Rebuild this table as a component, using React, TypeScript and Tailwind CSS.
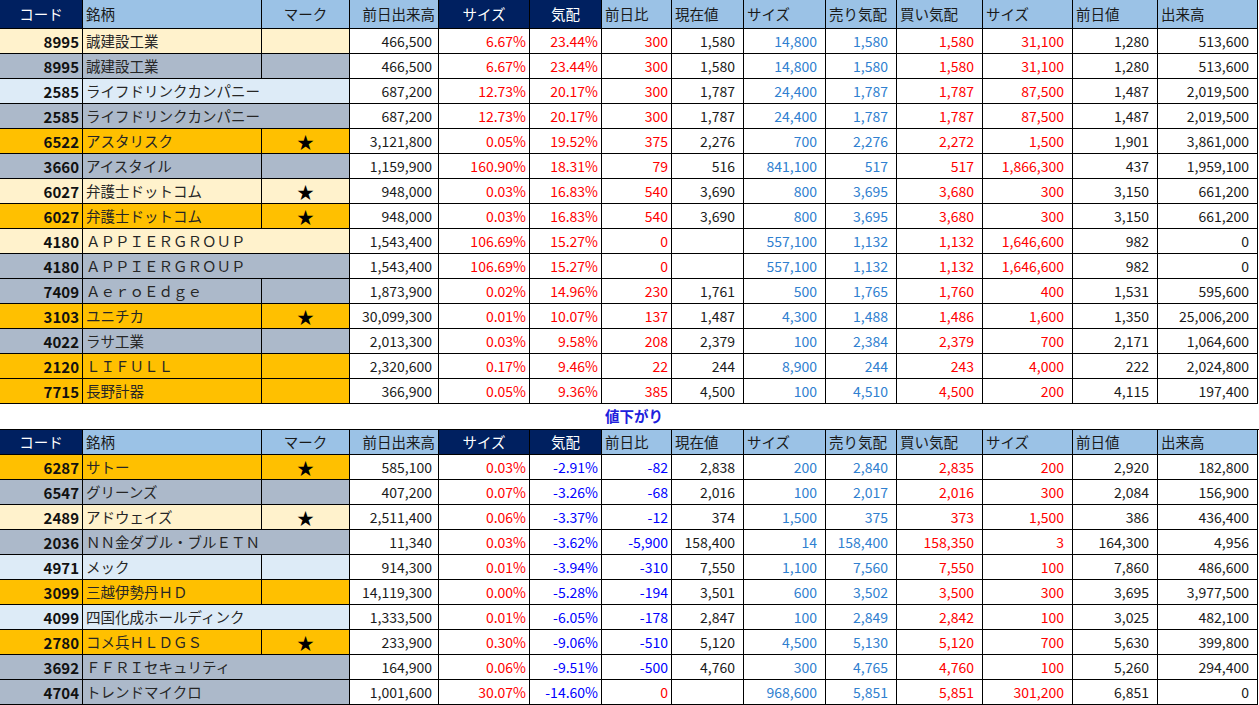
const GRID =
  "grid grid-cols-[83px_179px_88px_89px_91px_72px_70px_72px_82px_71px_86px_90px_85px_100px]";

type Bg = "cream" | "gray" | "lb" | "gold";

const bgClass: Record<Bg, string> = {
  cream: "bg-[#fff2cc]",
  gray: "bg-[#acb9ca]",
  lb: "bg-[#ddebf7]",
  gold: "bg-[#ffc000]",
};

type Row = {
  code: string;
  name: string;
  bg: Bg;
  star?: boolean;
  span?: boolean;
  v: string[];
};

const upRows: Row[] = [
  { code: "8995", name: "誠建設工業", bg: "cream", v: ["466,500", "6.67%", "23.44%", "300", "1,580", "14,800", "1,580", "1,580", "31,100", "1,280", "513,600"] },
  { code: "8995", name: "誠建設工業", bg: "gray", v: ["466,500", "6.67%", "23.44%", "300", "1,580", "14,800", "1,580", "1,580", "31,100", "1,280", "513,600"] },
  { code: "2585", name: "ライフドリンクカンパニー", bg: "lb", span: true, v: ["687,200", "12.73%", "20.17%", "300", "1,787", "24,400", "1,787", "1,787", "87,500", "1,487", "2,019,500"] },
  { code: "2585", name: "ライフドリンクカンパニー", bg: "gray", span: true, v: ["687,200", "12.73%", "20.17%", "300", "1,787", "24,400", "1,787", "1,787", "87,500", "1,487", "2,019,500"] },
  { code: "6522", name: "アスタリスク", bg: "gold", star: true, v: ["3,121,800", "0.05%", "19.52%", "375", "2,276", "700", "2,276", "2,272", "1,500", "1,901", "3,861,000"] },
  { code: "3660", name: "アイスタイル", bg: "gray", v: ["1,159,900", "160.90%", "18.31%", "79", "516", "841,100", "517", "517", "1,866,300", "437", "1,959,100"] },
  { code: "6027", name: "弁護士ドットコム", bg: "cream", star: true, v: ["948,000", "0.03%", "16.83%", "540", "3,690", "800", "3,695", "3,680", "300", "3,150", "661,200"] },
  { code: "6027", name: "弁護士ドットコム", bg: "gold", star: true, v: ["948,000", "0.03%", "16.83%", "540", "3,690", "800", "3,695", "3,680", "300", "3,150", "661,200"] },
  { code: "4180", name: "ＡＰＰＩＥＲＧＲＯＵＰ", bg: "cream", span: true, v: ["1,543,400", "106.69%", "15.27%", "0", "", "557,100", "1,132", "1,132", "1,646,600", "982", "0"] },
  { code: "4180", name: "ＡＰＰＩＥＲＧＲＯＵＰ", bg: "gray", span: true, v: ["1,543,400", "106.69%", "15.27%", "0", "", "557,100", "1,132", "1,132", "1,646,600", "982", "0"] },
  { code: "7409", name: "ＡｅｒｏＥｄｇｅ", bg: "gray", v: ["1,873,900", "0.02%", "14.96%", "230", "1,761", "500", "1,765", "1,760", "400", "1,531", "595,600"] },
  { code: "3103", name: "ユニチカ", bg: "gold", star: true, v: ["30,099,300", "0.01%", "10.07%", "137", "1,487", "4,300", "1,488", "1,486", "1,600", "1,350", "25,006,200"] },
  { code: "4022", name: "ラサ工業", bg: "gray", v: ["2,013,300", "0.03%", "9.58%", "208", "2,379", "100", "2,384", "2,379", "700", "2,171", "1,064,600"] },
  { code: "2120", name: "ＬＩＦＵＬＬ", bg: "gold", v: ["2,320,600", "0.17%", "9.46%", "22", "244", "8,900", "244", "243", "4,000", "222", "2,024,800"] },
  { code: "7715", name: "長野計器", bg: "gold", v: ["366,900", "0.05%", "9.36%", "385", "4,500", "100", "4,510", "4,500", "200", "4,115", "197,400"] },
];

const downRows: Row[] = [
  { code: "6287", name: "サトー", bg: "gold", star: true, v: ["585,100", "0.03%", "-2.91%", "-82", "2,838", "200", "2,840", "2,835", "200", "2,920", "182,800"] },
  { code: "6547", name: "グリーンズ", bg: "gray", v: ["407,200", "0.07%", "-3.26%", "-68", "2,016", "100", "2,017", "2,016", "300", "2,084", "156,900"] },
  { code: "2489", name: "アドウェイズ", bg: "cream", star: true, v: ["2,511,400", "0.06%", "-3.37%", "-12", "374", "1,500", "375", "373", "1,500", "386", "436,400"] },
  { code: "2036", name: "ＮＮ金ダブル・ブルＥＴＮ", bg: "gray", span: true, v: ["11,340", "0.03%", "-3.62%", "-5,900", "158,400", "14", "158,400", "158,350", "3", "164,300", "4,956"] },
  { code: "4971", name: "メック", bg: "lb", v: ["914,300", "0.01%", "-3.94%", "-310", "7,550", "1,100", "7,560", "7,550", "100", "7,860", "486,600"] },
  { code: "3099", name: "三越伊勢丹ＨＤ", bg: "gold", v: ["14,119,300", "0.00%", "-5.28%", "-194", "3,501", "600", "3,502", "3,500", "300", "3,695", "3,977,500"] },
  { code: "4099", name: "四国化成ホールディンク", bg: "lb", span: true, v: ["1,333,500", "0.01%", "-6.05%", "-178", "2,847", "100", "2,849", "2,842", "100", "3,025", "482,100"] },
  { code: "2780", name: "コメ兵ＨＬＤＧＳ", bg: "gold", star: true, v: ["233,900", "0.30%", "-9.06%", "-510", "5,120", "4,500", "5,130", "5,120", "700", "5,630", "399,800"] },
  { code: "3692", name: "ＦＦＲＩセキュリティ", bg: "gray", span: true, v: ["164,900", "0.06%", "-9.51%", "-500", "4,760", "300", "4,765", "4,760", "100", "5,260", "294,400"] },
  { code: "4704", name: "トレンドマイクロ", bg: "gray", span: true, v: ["1,001,600", "30.07%", "-14.60%", "0", "", "968,600", "5,851", "5,851", "301,200", "6,851", "0"] },
];

const RED = "text-[#ff0000]";
const BLUE = "text-[#0000ff]";
const SKY = "text-[#2f80d0]";
const INK = "text-[#1a1a1a]";

function valueColor(i: number, s: string) {
  if (i === 2 || i === 3) return s.startsWith("-") ? BLUE : RED;
  if (i === 1 || i === 7 || i === 8) return RED;
  if (i === 5 || i === 6) return SKY;
  return INK;
}

function valuePad(i: number) {
  if (i === 0) return "pr-[6px]";
  if (i <= 3) return "pr-[3px]";
  return "pr-[8px]";
}

const cell = "h-[25px] flex items-center border-r border-b border-black whitespace-nowrap";

function Header({ tall }: { tall?: boolean }) {
  const h = tall ? "h-[29px]" : "h-[25px]";
  const base = `${h} flex items-center border-r border-b border-black whitespace-nowrap text-[14.5px]`;
  const navy = `${base} bg-[#002060] text-white justify-center`;
  const light = `${base} bg-[#9bc2e6] text-[#1a1a1a] px-[3px]`;
  return (
    <div className={GRID}>
      <div className={navy}>コード</div>
      <div className={light}>銘柄</div>
      <div className={`${light} justify-center`}>マーク</div>
      <div className={`${light} justify-end`}>前日出来高</div>
      <div className={navy}>サイズ</div>
      <div className={navy}>気配</div>
      <div className={light}>前日比</div>
      <div className={light}>現在値</div>
      <div className={light}>サイズ</div>
      <div className={light}>売り気配</div>
      <div className={light}>買い気配</div>
      <div className={light}>サイズ</div>
      <div className={light}>前日値</div>
      <div className={light}>出来高</div>
    </div>
  );
}

function DataRow({ row }: { row: Row }) {
  const bg = bgClass[row.bg];
  return (
    <div className={GRID}>
      <div className={`${cell} ${bg} justify-end pr-[3px] font-bold text-[15px] text-[#111]`}>{row.code}</div>
      {row.span ? (
        <div className={`${cell} ${bg} col-span-2 pl-[3px] text-[14.5px] text-[#262626]`}>{row.name}</div>
      ) : (
        <>
          <div className={`${cell} ${bg} pl-[3px] text-[14.5px] text-[#262626]`}>{row.name}</div>
          <div className={`${cell} ${bg} justify-center text-black text-[17px]`}>{row.star ? "★" : ""}</div>
        </>
      )}
      {row.v.map((s, i) => (
        <div key={i} className={`${cell} bg-white justify-end ${valuePad(i)} ${valueColor(i, s)}`}>
          {s}
        </div>
      ))}
    </div>
  );
}

export default function App() {
  return (
    <div className="w-[1259px] h-[705px] bg-white overflow-hidden text-[14px] leading-none font-['Noto_Sans_CJK_JP',sans-serif]">
      <Header tall />
      {upRows.map((r, i) => (
        <DataRow key={`u${i}`} row={r} />
      ))}
      <div className={`${GRID} h-[25px]`}>
        <div className="col-start-7 col-span-2 flex items-center pl-[3px] font-bold text-[14.5px] text-[#2020dc] whitespace-nowrap">
          値下がり
        </div>
      </div>
      <div className="border-t border-black">
        <Header />
      </div>
      {downRows.map((r, i) => (
        <DataRow key={`d${i}`} row={r} />
      ))}
    </div>
  );
}
